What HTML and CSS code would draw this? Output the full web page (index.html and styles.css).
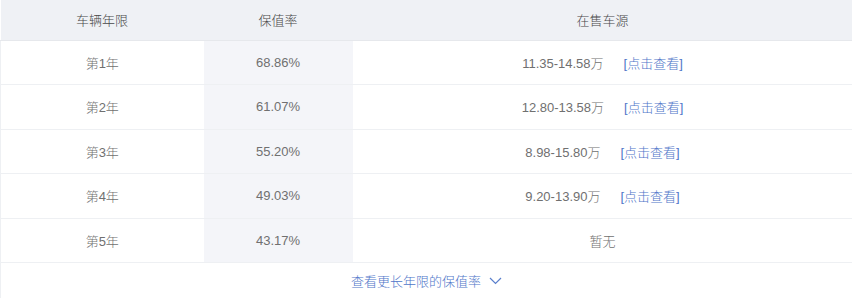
FILE: index.html
```html
<!DOCTYPE html>
<html lang="zh-CN">
<head>
<meta charset="utf-8">
<title>保值率</title>
<link rel="stylesheet" href="styles.css">
</head>
<body>
<div class="wrap">
  <table class="rate-table">
    <thead>
      <tr>
        <th class="c1">车辆年限</th>
        <th class="c2">保值率</th>
        <th class="c3">在售车源</th>
      </tr>
    </thead>
    <tbody>
      <tr>
        <td class="c1">第1年</td>
        <td class="c2">68.86%</td>
        <td class="c3">11.35-14.58万<a class="link">[点击查看]</a></td>
      </tr>
      <tr>
        <td class="c1">第2年</td>
        <td class="c2">61.07%</td>
        <td class="c3">12.80-13.58万<a class="link">[点击查看]</a></td>
      </tr>
      <tr>
        <td class="c1">第3年</td>
        <td class="c2">55.20%</td>
        <td class="c3">8.98-15.80万<a class="link">[点击查看]</a></td>
      </tr>
      <tr>
        <td class="c1">第4年</td>
        <td class="c2">49.03%</td>
        <td class="c3">9.20-13.90万<a class="link">[点击查看]</a></td>
      </tr>
      <tr>
        <td class="c1">第5年</td>
        <td class="c2">43.17%</td>
        <td class="c3">暂无</td>
      </tr>
    </tbody>
  </table>
  <div class="more">
    <span class="more-text">查看更长年限的保值率</span>
    <svg class="chev" width="13" height="8" viewBox="0 0 13 8"><path d="M1 1 L6.5 6.5 L12 1" fill="none" stroke="#5a7fcc" stroke-width="1.2"/></svg>
  </div>
</div>
</body>
</html>
```

FILE: styles.css
```css
html, body {
  margin: 0;
  padding: 0;
  background: #fff;
}
body {
  font-family: "Liberation Sans", "Noto Sans CJK SC", sans-serif;
  font-size: 13px;
  color: #707070;
}
.wrap {
  width: 852px;
}
.rate-table {
  width: 852px;
  border-collapse: collapse;
  table-layout: fixed;
}
.rate-table th,
.rate-table td {
  padding: 0;
  text-align: center;
  font-weight: 300;
}
.rate-table th {
  height: 39.5px;
  background: #eff1f5;
  color: #484848;
  border-bottom: 1px solid #e6e8ec;
}
.rate-table td {
  height: 43.5px;
  border-bottom: 1px solid #eef0f3;
}
.c1 { width: 203px; }
.c2 { width: 149px; }
.c3 { width: 500px; }
.rate-table td.c1 {
  border-left: 1px solid #eef0f3;
}
.rate-table td.c2 {
  background: #f4f5f9;
}
.link {
  color: #4f76c9;
  margin-left: 20px;
}
.more {
  height: 35px;
  display: flex;
  align-items: center;
  justify-content: center;
  gap: 8px;
  color: #4f76c9;
  font-weight: 300;
  border-left: 1px solid #eef0f3;
}
.chev {
  display: block;
}
```
